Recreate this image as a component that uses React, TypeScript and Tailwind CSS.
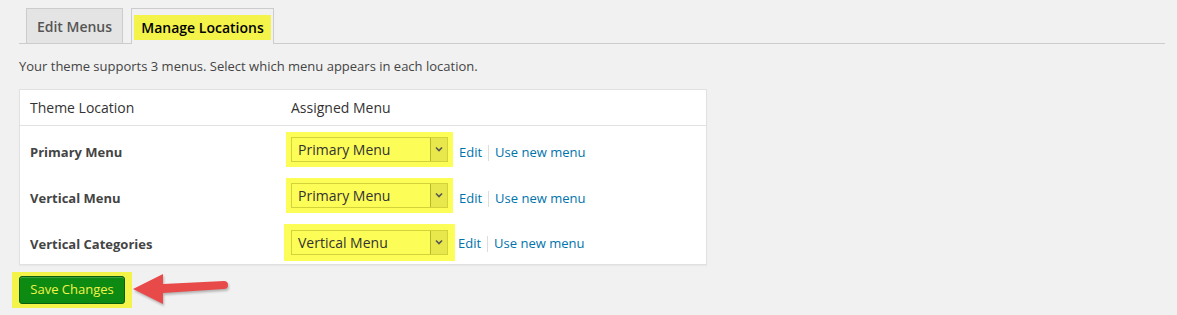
export default function App() {
  const rows = [
    { label: "Primary Menu", value: "Primary Menu" },
    { label: "Vertical Menu", value: "Primary Menu" },
    { label: "Vertical Categories", value: "Vertical Menu" },
  ];

  return (
    <div
      className="w-[1177px] h-[315px] bg-[#f1f1f1] text-[13px] text-[#444] overflow-hidden"
      style={{ fontFamily: "'Open Sans', 'Noto Sans', sans-serif" }}
    >
      {/* Tabs */}
      <div className="ml-[19px] mr-[12px] pt-[8px] pl-[7px] flex gap-[8px] border-b border-[#ccc]">
        <div className="h-[35px] w-[97px] flex items-center justify-center bg-[#e4e4e4] border border-b-0 border-[#ccc] text-[14px] font-semibold text-[#555]">
          Edit Menus
        </div>
        <div className="h-[36px] w-[143px] -mb-px flex items-start justify-center pt-[6px] bg-[#f1f1f1] border border-b-0 border-[#ccc]">
          <span className="h-[25px] px-[7px] flex items-center bg-[#f3f34a] text-[14px] font-semibold text-black">
            Manage Locations
          </span>
        </div>
      </div>

      <p className="ml-[19px] mt-[12px] leading-[20px] text-[#444]">
        Your theme supports 3 menus. Select which menu appears in each location.
      </p>

      {/* Locations table */}
      <div className="ml-[19px] mt-[13px] w-[688px] bg-white border border-[#e1e1e1] shadow-[0_1px_1px_rgba(0,0,0,0.04)]">
        <div className="h-[36px] flex items-center border-b border-[#e1e1e1] text-[14px] text-[#333]">
          <div className="w-[271px] pl-[10px]">Theme Location</div>
          <div>Assigned Menu</div>
        </div>
        {rows.map((row, i) => (
          <div key={row.label} className="h-[46px] flex items-center">
            <div className="w-[271px] pl-[10px] pt-[8px] font-bold text-[#444]">{row.label}</div>
            <div className={`flex items-center ${i === 2 ? "ml-[-7px] mt-[2px]" : "ml-[-5px]"}`}>
              <div className={`bg-[#fdfd58] ${i === 2 ? "p-[6px_7px]" : "p-[5px]"}`}>
                <div className="w-[157px] h-[25px] flex items-center border border-[#d2d23a] bg-[#fdfd58]">
                  <span className="flex-1 pl-[6px] text-[14px] text-[#333]">{row.value}</span>
                  <span className="w-[17px] h-full flex items-center justify-center border-l border-[#b8b830] bg-[#e8e84c]">
                    <svg width="8" height="6" viewBox="0 0 8 6">
                      <path d="M1 1.5 L4 4.5 L7 1.5" fill="none" stroke="#555" strokeWidth="1.6" />
                    </svg>
                  </span>
                </div>
              </div>
              <div className={`flex items-center ${i === 2 ? "pt-[4px] ml-[3px]" : "pt-[7px] ml-[6px]"}`}>
                <a className="text-[#0073aa]">Edit</a>
                <span className="mx-[6px] w-px h-[16px] bg-[#ddd]" />
                <a className="text-[#0073aa]">Use new menu</a>
              </div>
            </div>
          </div>
        ))}
      </div>

      {/* Save */}
      <div className="ml-[12px] mt-[7px] flex items-center">
        <div className="bg-[#f3f34a] px-[7px] py-[4px]">
          <button className="h-[28px] w-[106px] rounded-[3px] bg-[#0d8a12] border border-[#0a5e0d] text-[#f3f34a] text-[13px] shadow-[inset_0_1px_0_rgba(255,255,255,0.2)]">
            Save Changes
          </button>
        </div>
        <svg width="100" height="36" viewBox="0 0 100 36" className="drop-shadow-[1px_2px_1px_rgba(0,0,0,0.25)]">
          <path
            d="M1 17 L31 2 L31 12 L92 9 A4 4 0 0 1 92 17 L31 21 L31 32 Z"
            fill="#e84a4a"
          />
        </svg>
      </div>
    </div>
  );
}
